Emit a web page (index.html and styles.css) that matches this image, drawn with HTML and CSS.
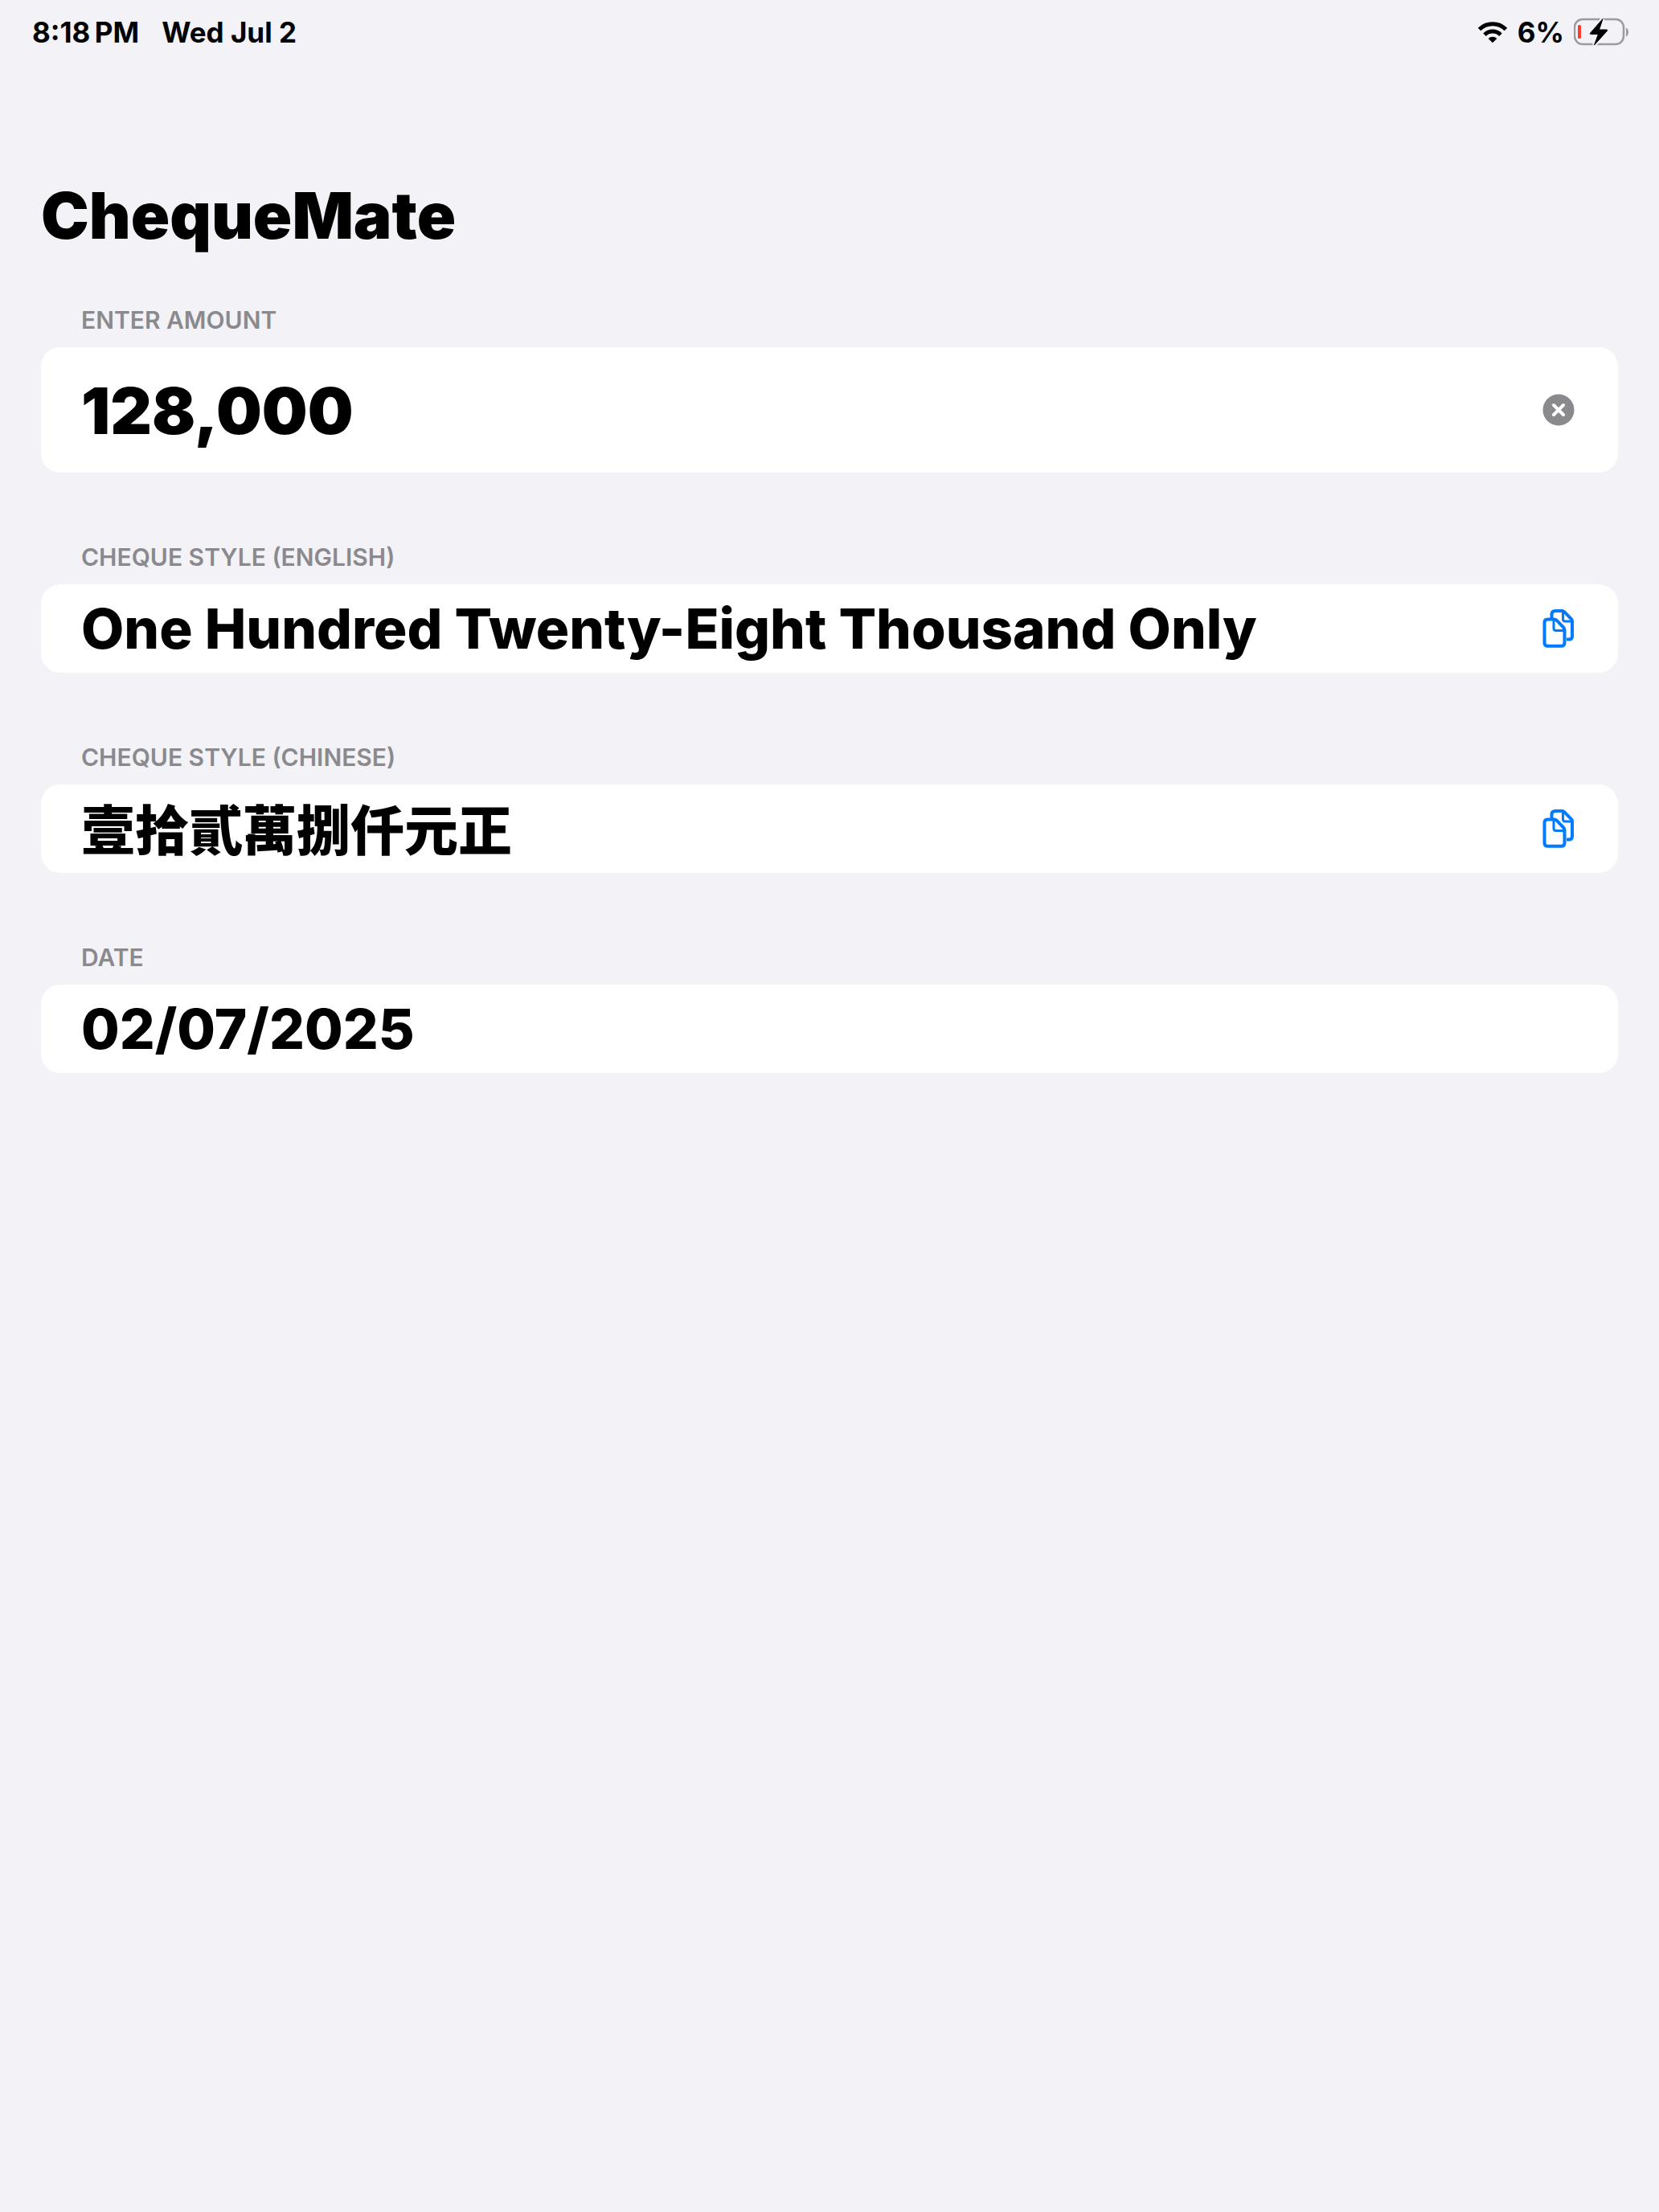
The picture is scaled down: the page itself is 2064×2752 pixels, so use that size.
FILE: index.html
```html
<!DOCTYPE html>
<html lang="en">
<head>
    <meta charset="UTF-8">
    <meta name="viewport" content="width=device-width, initial-scale=1.0">
    <title>ChequeMate</title>
    <link rel="stylesheet" href="styles.css">
</head>
<body>
    <header class="status-bar">
        <div class="status-left">
            <span>8:18&thinsp;PM</span>
            <span>Wed Jul 2</span>
        </div>
        <div class="status-right">
            <svg class="wifi" viewBox="0 0 38 28" aria-hidden="true">
                <path d="M2.500 10.500a23.500 23.500 0 0 1 33 0" fill="none" stroke="#000" stroke-width="5"/>
                <path d="M9 17.200a14.300 14.300 0 0 1 20 0" fill="none" stroke="#000" stroke-width="5"/>
                <path d="M13.600 22a7.800 7.800 0 0 1 10.800 0L19 27.200z"/>
            </svg>
            <span>6%</span>
            <svg class="battery" viewBox="0 0 70 36" aria-hidden="true">
                <rect x="1" y="2" width="61" height="31" rx="10" fill="none" stroke="#9c9ba0" stroke-width="2.500"/>
                <path d="M65 12.500c4 1.500 4 9.500 0 11z" fill="#9c9ba0"/>
                <rect x="5" y="9" width="4" height="17" rx="1.500" fill="#ff3b30"/>
                <path d="M36 1.500 20.500 19.200q-.8 1.300.8 1.300h9.200L25.500 34l16-17.700q.8-1.300-.8-1.300h-9.200z" stroke="#f2f2f7" stroke-width="5"/>
                <path d="M36 1.500 20.500 19.200q-.8 1.300.8 1.300h9.200L25.500 34l16-17.700q.8-1.300-.8-1.300h-9.200z" stroke="#000" stroke-width="1"/>
            </svg>
        </div>
    </header>

    <main class="page">
        <h1>ChequeMate</h1>

        <section class="group">
            <label for="amount">ENTER AMOUNT</label>
            <div class="card card-amount">
                <input type="text" id="amount" inputmode="decimal" value="128,000">
                <button type="button" class="icon-btn" id="clearBtn" aria-label="Clear">
                    <svg viewBox="0 0 40 48">
                        <circle cx="20" cy="24" r="19.500" fill="#8a8a8e"/>
                        <path d="M14 18l12 12M26 18L14 30" stroke="#fff" stroke-width="4" stroke-linecap="round"/>
                    </svg>
                </button>
            </div>
        </section>

        <section class="group">
            <label for="english">CHEQUE STYLE (ENGLISH)</label>
            <div class="card">
                <output id="english">One Hundred Twenty-Eight Thousand Only</output>
                <button type="button" class="icon-btn" data-copy="english" aria-label="Copy">
                    <svg viewBox="0 0 40 48" fill="none" stroke="#007aff" stroke-width="4" stroke-linejoin="round">
                        <path d="M11.500 11V6.500Q11.500 2 16 2h8.500q1.500 0 2.600 1.100l9 9.200Q37 13.300 37 15v18.500q0 4-4 4h-3"/>
                        <path d="M25.500 2.500V12q0 3 3 3H37" stroke-width="3"/>
                        <path d="M6.500 12.500h8q2 0 3.300 1.300l8.200 8.500q1.500 1.500 1.500 3.500v16q0 4-4 4h-17q-4 0-4-4v-25.300q0-4 4-4z"/>
                        <path d="M14 13v10.500q0 3 3 3h10.500" stroke-width="3"/>
                    </svg>
                </button>
            </div>
        </section>

        <section class="group">
            <label for="chinese">CHEQUE STYLE (CHINESE)</label>
            <div class="card">
                <output id="chinese" class="chinese" lang="zh-Hant">壹拾貳萬捌仟元正</output>
                <button type="button" class="icon-btn" data-copy="chinese" aria-label="Copy">
                    <svg viewBox="0 0 40 48" fill="none" stroke="#007aff" stroke-width="4" stroke-linejoin="round">
                        <path d="M11.500 11V6.500Q11.500 2 16 2h8.500q1.500 0 2.600 1.100l9 9.200Q37 13.300 37 15v18.500q0 4-4 4h-3"/>
                        <path d="M25.500 2.500V12q0 3 3 3H37" stroke-width="3"/>
                        <path d="M6.500 12.500h8q2 0 3.300 1.300l8.200 8.500q1.500 1.500 1.500 3.500v16q0 4-4 4h-17q-4 0-4-4v-25.300q0-4 4-4z"/>
                        <path d="M14 13v10.500q0 3 3 3h10.500" stroke-width="3"/>
                    </svg>
                </button>
            </div>
        </section>

        <section class="group">
            <label for="date">DATE</label>
            <div class="card">
                <output id="date">02/07/2025</output>
            </div>
        </section>
    </main>

    <script>
        // Clear the amount field
        document.getElementById('clearBtn').addEventListener('click', () => {
            document.getElementById('amount').value = '';
        });

        // Copy a result to the clipboard
        document.querySelectorAll('[data-copy]').forEach(btn => {
            btn.addEventListener('click', () => {
                navigator.clipboard.writeText(document.getElementById(btn.dataset.copy).textContent);
            });
        });
    </script>
</body>
</html>
```
FILE: styles.css
```css
* {
    box-sizing: border-box;
}

body {
    margin: 0;
    font-family: Inter, "Noto Sans CJK TC", sans-serif;
    background-color: #f2f2f7;
    color: #000;
}

.status-bar {
    display: flex;
    justify-content: space-between;
    align-items: center;
    height: 80px;
    padding: 0 36px 0 40px;
    font-size: 35px;
    font-weight: 700;
}

.status-left {
    display: flex;
    gap: 28px;
}

.status-right {
    display: flex;
    align-items: center;
    gap: 12px;
}

.wifi {
    width: 38px;
    height: 28px;
}

.battery {
    width: 70px;
    height: 36px;
}

.page {
    padding: 138px 51px 51px;
}

h1 {
    margin: 0 0 62px;
    font-size: 80px;
    line-height: 100px;
    font-weight: 900;
}

.group {
    margin-bottom: 87px;
}

.group label {
    display: block;
    margin: 0 50px 16px;
    font-size: 30px;
    line-height: 36px;
    font-weight: 600;
    color: #8a8a8e;
}

.card {
    display: flex;
    align-items: center;
    justify-content: space-between;
    gap: 20px;
    min-height: 110px;
    padding: 0 54px 0 50px;
    border-radius: 24px;
    background-color: #fff;
    font-size: 69px;
    font-weight: 800;
}

.card-amount {
    min-height: 156px;
}

#amount {
    flex: 1;
    min-width: 0;
    padding: 0;
    border: 0;
    outline: 0;
    background: none;
    font-family: inherit;
    font-size: 80px;
    font-weight: 900;
    color: inherit;
}

.chinese {
    padding-bottom: 4px;
    font-family: "Noto Sans CJK TC", sans-serif;
    font-size: 67px;
    line-height: 100px;
    font-weight: 900;
}

.icon-btn {
    flex: none;
    display: block;
    width: 40px;
    height: 48px;
    padding: 0;
    border: 0;
    background: none;
    cursor: pointer;
}

.icon-btn svg {
    display: block;
    width: 40px;
    height: 48px;
}
```
